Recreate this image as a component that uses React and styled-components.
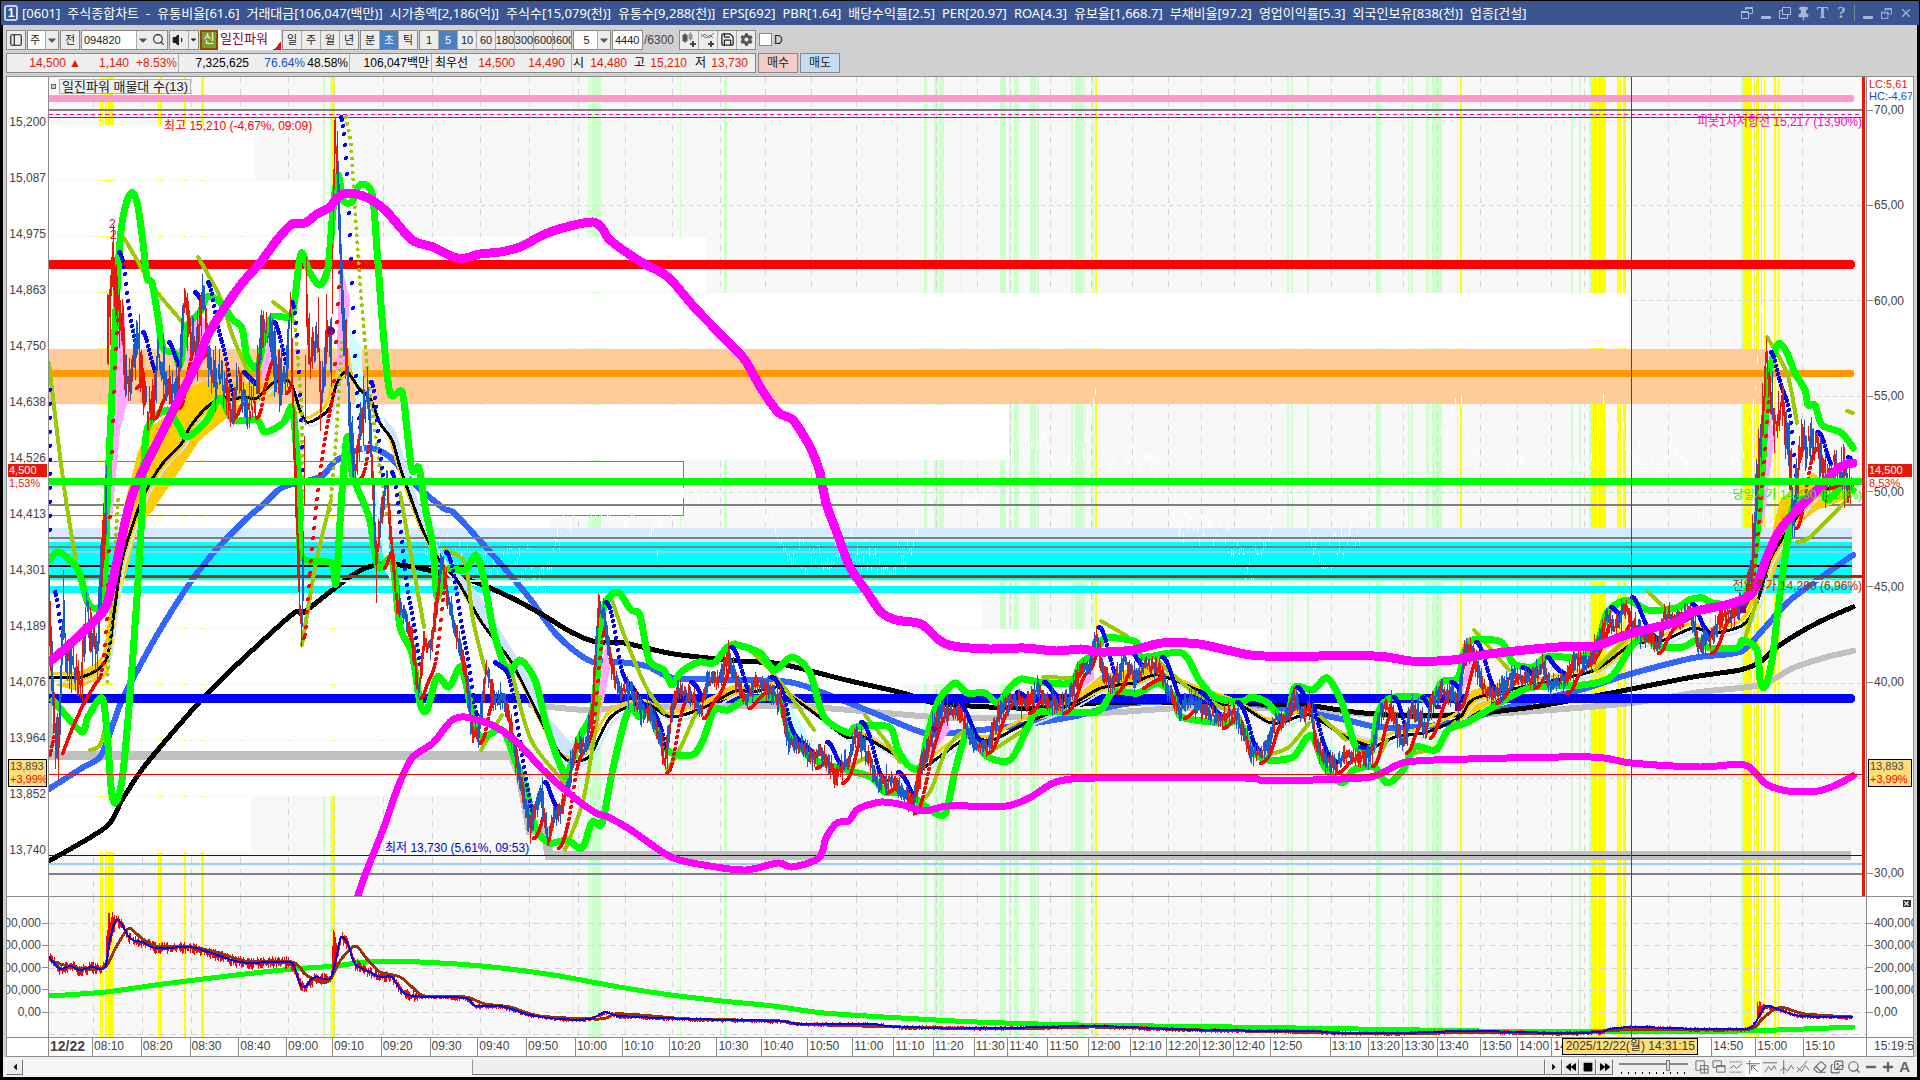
import React, { useState } from "react";
import styled, { createGlobalStyle, css } from "styled-components";
import {
  FaCaretDown,
  FaCaretLeft,
  FaCaretRight,
  FaBackward,
  FaForward,
  FaStop,
  FaCog,
} from "react-icons/fa";
import {
  Search,
  Volume1,
  Save,
  Pin,
  Minus,
  X,
  Plus,
  PanelLeft,
  Eraser,
  Images,
} from "lucide-react";

const GlobalStyle = createGlobalStyle`
  * {
    box-sizing: border-box;
  }
  body {
    margin: 0;
    background: #000;
    font-family: "Liberation Sans", "Noto Sans CJK KR", sans-serif;
    font-size: 12px;
    line-height: 14px;
    color: #222;
  }
  button, input, select {
    font: inherit;
    color: inherit;
    margin: 0;
    padding: 0;
  }
`;

/* ---------- data ---------- */

const titleParts = [
  "[0601]", "주식종합차트", "-", "유통비율[61.6]", "거래대금[106,047(백만)]", "시가총액[2,186(억)]",
  "주식수[15,079(천)]", "유통수[9,288(천)]", "EPS[692]", "PBR[1.64]", "배당수익률[2.5]", "PER[20.97]",
  "ROA[4.3]", "유보율[1,668.7]", "부채비율[97.2]", "영업이익률[5.3]", "외국인보유[838(천)]", "업종[건설]",
];

const prices = ["15,200", "15,087", "14,975", "14,863", "14,750", "14,638", "14,526", "14,413", "14,301", "14,189", "14,076", "13,964", "13,852", "13,740"];
const levels = ["70,00", "65,00", "60,00", "55,00", "50,00", "45,00", "40,00", "35,00", "30,00"];
const volumes = ["400,000", "300,000", "200,000", "100,000", "0,00"];

// label, left edge
const times = [
  ["12/22", 49], ["08:10", 93], ["08:20", 142], ["08:30", 191], ["08:40", 240], ["09:00", 288],
  ["09:10", 334], ["09:20", 383], ["09:30", 432], ["09:40", 480], ["09:50", 529], ["10:00", 578],
  ["10:10", 625], ["10:20", 672], ["10:30", 720], ["10:40", 765], ["10:50", 811], ["11:00", 856],
  ["11:10", 897], ["11:20", 936], ["11:30", 977], ["11:40", 1010], ["11:50", 1050], ["12:00", 1091],
  ["12:10", 1132], ["12:20", 1168], ["12:30", 1201], ["12:40", 1234], ["12:50", 1271], ["13:10", 1331],
  ["13:20", 1369], ["13:30", 1403], ["13:40", 1437], ["13:50", 1480], ["14:00", 1517], ["14:10", 1551],
  ["", 1584], ["", 1625], ["", 1668], ["14:50", 1710], ["15:00", 1754], ["15:10", 1802],
];
const PLOT_END = 1866;

const yellowBars = [
  [100, 1], [102, 1], [105, 2], [108, 6], [158, 1], [160, 2], [184, 2], [201, 3], [332, 3],
  [1095, 2], [1460, 2], [1591, 6], [1598, 8], [1617, 2], [1620, 1], [1623, 3],
  [1743, 9], [1754, 1], [1756, 3], [1761, 1], [1764, 1], [1774, 2], [1778, 1],
];
const greenBars = [
  [323, 2], [330, 2], [573, 1], [588, 1], [590, 1], [592, 8], [600, 1], [680, 1], [724, 3], [924, 3],
  [934, 4], [939, 5], [961, 1], [1000, 6], [1009, 2], [1014, 5], [1030, 6], [1037, 2], [1071, 2],
  [1075, 9], [1085, 1], [1092, 2], [1287, 2], [1291, 2], [1307, 2], [1376, 5], [1408, 1], [1411, 2],
  [1426, 3], [1432, 2], [1434, 8], [1457, 1], [1571, 2], [1579, 2], [1589, 2], [1741, 2],
];

// right edge of each price zone, from the top
const zones = [255, 323, 706, 1629, 1766, 1009, 683, 551, 982, 1267, 900, 480, 251];

const upperBand = "49,662 67,647 102,613 110,593 120,547 128,510 137,483 167,423 197,363 207,337 223,310 243,282 260,263 277,240 292,224 305,223 317,214 330,207 337,198 348,193 368,198 387,212 412,240 433,247 453,257 465,258 480,254 500,252 520,247 545,234 570,226 593,222 602,228 610,240 641,262 668,277 695,308 728,342 745,360 762,390 779,413 793,420 810,447 820,473 826,503 837,533 850,567 867,592 881,612 896,620 921,624 939,640 953,646 989,649 1024,648 1056,651 1081,649 1101,652 1133,650 1162,643 1199,644 1231,651 1264,656 1374,656 1411,661 1452,660 1489,654 1558,647 1595,646 1623,636 1648,629 1677,622 1693,612 1733,603 1753,592 1767,557 1780,530 1800,507 1820,487 1840,467 1853,463";
const lowerBand = "358,895 367,870 384,827 398,787 412,758 433,743 451,721 465,717 494,726 518,743 543,770 571,795 596,813 608,817 631,830 671,857 710,866 746,870 778,863 792,867 819,858 826,838 837,823 849,821 858,809 881,802 903,805 924,811 949,806 1006,806 1031,797 1056,782 1096,778 1244,778 1268,781 1362,778 1382,773 1407,762 1468,759 1591,757 1631,763 1700,767 1745,765 1766,784 1788,791 1818,791 1836,785 1853,776";
const longAverage = "49,861 106,827 122,800 147,763 204,697 245,657 294,613 304,612 351,576 376,565 408,566 469,580 510,597 543,615 571,632 596,642 624,643 674,654 739,661 781,664 846,680 903,693 935,703 989,707 1039,708 1096,703 1160,702 1260,704 1305,705 1354,712 1407,716 1468,714 1533,707 1611,693 1693,677 1740,670 1760,662 1780,645 1817,623 1853,607";
const midAverage = "49,789 82,768 100,757 110,733 122,700 143,660 163,625 192,580 216,550 245,520 265,503 283,487 320,477 337,460 367,448 390,457 410,480 443,508 453,512 473,533 506,570 531,600 555,633 580,655 596,663 606,661 646,666 674,678 739,680 789,682 821,692 874,713 910,728 931,734 981,730 1035,723 1076,716 1133,703 1240,703 1305,712 1346,720 1378,727 1419,727 1460,721 1517,705 1580,690 1627,675 1693,658 1740,652 1760,633 1787,603 1813,583 1853,555";
const slowAverage = "531,705 571,709 596,710 640,705 660,707 760,706 810,707 874,712 935,717 989,718 1060,715 1120,712 1182,708 1264,708 1387,715 1468,715 1550,710 1631,703 1700,692 1760,685 1793,668 1827,657 1853,651";
const shortAverage = "49,677 82,677 106,660 114,613 122,560 139,507 149,485 163,463 182,443 190,427 207,407 223,398 233,400 242,397 257,398 273,383 290,382 300,410 307,422 320,417 330,407 337,383 347,372 360,390 370,398 380,423 392,440 400,467 408,490 424,533 441,563 457,580 482,623 510,660 531,700 551,740 567,760 588,758 598,740 610,718 628,707 649,705 671,717 703,708 735,691 753,692 778,687 792,697 817,715 846,737 864,737 903,760 917,771 939,757 967,738 992,740 1028,722 1074,703 1101,688 1133,683 1158,675 1203,692 1240,705 1268,722 1284,722 1309,715 1346,737 1374,746 1395,737 1427,732 1460,717 1476,698 1542,683 1595,670 1631,645 1664,640 1693,628 1713,633 1743,625 1757,603 1770,560 1790,527 1813,497 1833,487 1853,486";
const envelopeTop = "49,560 59,552 78,570 88,603 98,608 104,593 107,507 112,393 118,270 122,223 128,198 133,193 138,207 143,243 147,278 152,283 158,317 163,348 175,353 180,365 187,327 200,312 207,297 220,302 233,320 242,328 247,357 257,368 263,343 272,317 290,317 295,297 301,253 310,273 320,285 328,267 333,210 338,175 343,200 352,202 360,185 372,193 377,250 383,330 390,393 402,392 407,430 412,470 419,468 425,507 433,547 437,597 445,570 465,570 476,555 484,580 494,633 508,672 520,660 535,680 547,727 561,767 567,775 580,737 592,713 598,667 603,610 617,592 631,610 640,615 649,660 664,670 672,685 681,672 699,662 714,663 731,645 760,653 774,670 792,657 810,673 824,717 849,733 856,727 889,727 898,750 910,767 921,767 928,733 939,700 955,683 967,693 985,693 998,703 1010,687 1021,679 1039,682 1071,683 1081,663 1096,653 1105,638 1136,642 1142,657 1182,653 1199,680 1215,697 1240,702 1252,697 1268,703 1280,717 1289,712 1295,687 1313,690 1327,678 1342,703 1354,743 1362,750 1372,750 1378,713 1391,698 1419,697 1431,702 1442,682 1458,678 1464,653 1472,640 1501,642 1513,663 1533,667 1546,657 1574,657 1595,650 1607,613 1627,600 1648,610 1676,608 1689,600 1703,598 1713,603 1740,603 1752,573 1760,500 1768,383 1773,357 1779,343 1787,353 1795,373 1805,390 1808,405 1815,405 1822,425 1840,432 1850,443 1853,448";
const envelopeBottom = "53,700 63,712 82,732 88,717 102,698 107,733 111,787 115,803 122,780 129,707 137,597 142,513 147,430 167,410 177,423 187,437 207,420 220,398 233,420 257,420 265,432 283,423 292,407 296,443 300,507 302,557 331,563 336,583 341,507 347,437 353,477 369,517 378,567 392,560 400,627 412,653 420,703 427,710 437,677 449,687 461,667 471,707 480,737 502,730 514,757 527,793 535,827 549,843 567,840 582,848 592,822 602,823 612,773 624,723 631,707 639,717 649,713 667,750 692,755 703,740 714,710 728,710 746,700 778,700 789,730 810,757 835,767 871,777 885,792 903,793 917,800 935,813 946,812 956,767 969,730 985,755 1010,760 1028,727 1039,712 1096,712 1113,692 1138,693 1158,683 1174,697 1182,717 1223,723 1240,723 1252,750 1268,760 1293,757 1305,740 1313,737 1325,767 1342,783 1354,770 1374,767 1387,783 1403,770 1415,747 1436,750 1448,730 1468,722 1493,707 1529,688 1582,685 1611,677 1631,647 1644,638 1660,647 1683,647 1697,640 1710,648 1737,648 1743,640 1757,650 1760,680 1765,687 1772,660 1778,610 1787,543 1793,507 1803,500 1820,490 1828,500 1843,485 1853,490";

const oliveSolid = [
  "49,363 58,440 67,507 78,570 88,603",
  "124,238 137,260 153,287 183,323",
  "198,257 220,297 233,337 253,383",
  "273,302 287,313 295,323",
  "90,750 100,745 107,720",
  "302,645 316,563 331,500",
  "400,493 412,560 424,627",
  "445,550 465,563 473,620 486,673",
  "481,750 502,715",
  "510,665 531,740 567,785",
  "565,850 584,797 600,697",
  "612,600 626,640 646,687 664,713",
  "667,770 678,753 696,713",
  "735,642 753,653 781,683 814,730",
  "849,767 865,758",
  "865,715 885,740 900,762",
  "917,805 931,790 946,750 964,730",
  "989,753 1028,727",
  "1043,677 1072,678",
  "1101,621 1127,636",
  "1154,657 1191,690 1240,717",
  "1268,755 1289,747 1309,723",
  "1321,717 1346,740",
  "1374,767 1387,740",
  "1415,753 1436,747 1455,722",
  "1474,630 1509,670",
  "1595,670 1625,640",
  "1647,591 1664,607",
  "1743,645 1757,600",
  "1767,337 1787,373 1797,423",
  "1797,542 1810,537 1847,500",
  "1847,411 1853,413",
];
const oliveDotted = [
  "118,500 112,600 107,687",
  "295,323 302,410 302,500",
  "346,117 351,143 355,210 360,283 368,377 380,470 388,520",
  "330,510 336,440 342,340",
];

const pricePath = "49,600 52,680 55,740 58,745 63,610 66,660 75,670 80,690 86,610 92,640 97,650 102,550 106,500 107,330 110,300 113,260 116,300 122,320 125,380 130,380 137,340 141,370 147,410 152,410 158,350 165,380 172,400 178,390 184,300 190,330 195,350 200,320 203,290 208,360 213,380 220,375 230,410 238,380 245,410 255,400 262,330 270,330 276,380 285,385 290,310 294,450 298,570 301,630 303,560 306,300 310,360 318,330 320,400 327,330 331,350 333,200 335,125 338,200 342,300 345,340 350,420 354,470 357,450 362,420 367,390 371,450 376,560 380,520 386,480 390,530 396,600 402,610 410,630 418,690 424,640 430,650 437,600 441,560 446,590 455,630 465,670 472,730 478,735 486,670 495,700 504,700 513,740 522,790 530,830 540,790 548,840 553,820 560,810 567,790 575,745 585,745 592,710 598,610 603,610 610,660 618,690 630,690 640,710 650,710 660,740 664,765 672,710 678,690 690,695 700,710 708,680 718,680 728,655 735,680 745,700 755,685 770,690 780,700 788,740 800,745 814,760 820,750 835,775 848,760 856,730 865,750 878,785 890,780 900,790 913,805 920,770 930,740 940,710 955,710 963,720 975,745 987,745 1000,710 1010,700 1025,705 1037,690 1050,705 1068,700 1080,670 1090,665 1096,635 1102,670 1112,685 1125,660 1135,680 1145,665 1158,670 1170,695 1180,710 1190,700 1205,710 1220,720 1233,710 1242,730 1252,755 1265,750 1275,720 1287,715 1293,695 1302,715 1310,705 1315,740 1325,762 1336,765 1345,755 1360,758 1372,752 1380,710 1390,705 1402,745 1412,705 1425,730 1432,700 1442,690 1458,700 1464,655 1472,650 1480,680 1490,695 1505,685 1515,675 1530,680 1542,665 1550,685 1565,680 1575,660 1590,660 1600,640 1607,615 1614,630 1626,605 1632,625 1645,635 1658,645 1664,615 1678,620 1690,612 1698,645 1712,635 1722,615 1738,610 1745,600 1752,560 1757,480 1762,420 1766,360 1770,390 1775,430 1782,400 1790,470 1793,520 1800,450 1810,440 1818,450 1825,480 1832,465 1845,475 1851,490";
const ghostPath = "425,560 440,540 470,560 500,556 530,560 545,585 556,545 566,515 580,490 620,515 640,490 657,540 665,500 700,480 730,470 760,500 790,545 815,560 850,545 870,555 890,560 912,545 925,480 960,480 980,490 1000,450 1040,440 1060,480 1085,430 1095,390 1110,470 1150,450 1170,500 1190,530 1220,525 1250,570 1280,490 1300,480 1320,560 1360,525 1380,460 1400,500 1440,445 1460,400 1480,470 1520,470 1560,480 1590,460 1602,400 1625,430 1650,470 1680,440 1700,500 1740,460 1755,380 1762,310 1768,300";

const volumeFast = "49,958 60,970 70,967 80,971 92,968 100,970 106,966 110,940 116,921 122,925 128,937 135,942 143,943 155,949 190,948 205,952 220,957 235,962 250,964 270,963 290,963 295,970 300,985 305,988 315,978 330,980 336,960 341,938 348,945 355,965 370,973 380,978 392,978 400,990 412,997 465,999 475,1007 500,1007 530,1016 560,1020 590,1020 605,1013 620,1017 690,1020 780,1022 800,1025 870,1025 900,1028 1000,1029 1095,1027 1200,1031 1310,1032 1340,1034 1400,1034 1470,1032 1560,1034 1600,1033 1610,1030 1635,1028 1700,1030 1745,1030 1755,1024 1766,1007 1780,1011 1800,1017 1852,1018";
const volumeMid = "49,960 60,965 85,970 105,968 115,950 124,935 130,929 138,936 155,947 190,948 220,954 245,962 292,963 305,975 320,983 330,981 340,962 355,947 367,960 380,973 400,978 412,988 425,997 465,998 485,1005 510,1008 540,1017 600,1020 615,1015 640,1016 690,1020 780,1022 800,1025 900,1028 1000,1030 1095,1028 1200,1031 1340,1034 1400,1035 1480,1033 1560,1035 1620,1031 1700,1031 1750,1030 1762,1020 1775,1010 1785,1009 1805,1015 1852,1018";
const volumeSlow = "49,997 106,993 163,985 245,975 294,970 335,967 367,963 420,963 482,967 547,975 592,983 625,989 671,996 722,1002 773,1007 824,1014 901,1019 977,1023 1079,1026 1232,1028 1420,1031 1560,1033 1740,1032 1853,1028";

/* ---------- helpers ---------- */

const toPoints = (str) => str.split(" ").map((p) => p.split(",").map(Number));

const valueAt = (pts, x) => {
  for (let i = 1; i < pts.length; i++) {
    if (x <= pts[i][0]) {
      const [x0, y0] = pts[i - 1];
      const [x1, y1] = pts[i];
      return y0 + ((y1 - y0) * (x - x0)) / (x1 - x0 || 1);
    }
  }
  return pts[pts.length - 1][1];
};

const smooth = (str) => {
  const p = toPoints(str);
  let d = `M${p[0][0]} ${p[0][1]}`;
  for (let i = 0; i < p.length - 1; i++) {
    const a = p[i - 1] || p[i];
    const b = p[i];
    const c = p[i + 1];
    const e = p[i + 2] || c;
    d += `C${b[0] + (c[0] - a[0]) / 7} ${b[1] + (c[1] - a[1]) / 7} ${c[0] - (e[0] - b[0]) / 7} ${c[1] - (e[1] - b[1]) / 7} ${c[0]} ${c[1]}`;
  }
  return d;
};

const makeRandom = (seed) => {
  let s = seed;
  return () => {
    s = (s * 16807) % 2147483647;
    return s / 2147483647;
  };
};

const makeCandles = () => {
  const rnd = makeRandom(41);
  const pts = toPoints(pricePath);
  const up = [];
  const down = [];
  let side = true;
  for (let x = 49; x < 1852; x += 1) {
    const y = valueAt(pts, x);
    const slope = Math.abs(valueAt(pts, x + 2) - valueAt(pts, x - 2));
    const wild = x < 380 || x > 1750 ? 32 : 13;
    const spike = rnd() > 0.93 ? wild : 0;
    const h = Math.min(70, 5 + rnd() * wild + spike + slope * 0.5);
    const mid = y + (rnd() - 0.5) * wild * 0.7;
    const top = Math.max(118, Math.round(mid - h / 2));
    if (rnd() > 0.55) side = !side;
    (side ? up : down).push(`M${x + 0.5} ${top}v${Math.round(h)}`);
  }
  return { up: up.join(""), down: down.join("") };
};

// stop-and-reverse dots that trail the price
const makeStops = () => {
  const pts = toPoints(pricePath);
  const above = [];
  const below = [];
  let rising = true;
  let stop = 760;
  let extreme = 600;
  let af = 0.03;
  for (let x = 50; x < 1852; x += 1) {
    const y = valueAt(pts, x);
    stop += (extreme - stop) * af;
    if (rising) {
      if (y < extreme) {
        extreme = y;
        af = Math.min(0.18, af + 0.012);
      }
      if (y > stop) {
        rising = false;
        stop = extreme - 8;
        extreme = y;
        af = 0.02;
      }
    } else {
      if (y > extreme) {
        extreme = y;
        af = Math.min(0.18, af + 0.012);
      }
      if (y < stop) {
        rising = true;
        stop = extreme + 8;
        extreme = y;
        af = 0.02;
      }
    }
    (rising ? below : above).push(`M${x} ${Math.round(stop)}h0`);
  }
  return { above: above.join(""), below: below.join("") };
};

const makeGhost = () => {
  const rnd = makeRandom(7);
  const pts = toPoints(ghostPath);
  let d = "";
  for (let x = 425; x < 1768; x += 2) {
    const y = valueAt(pts, x) + (rnd() - 0.5) * 32;
    d += `M${x + 0.5} ${Math.round(y)}v${Math.round(3 + rnd() * 8)}`;
  }
  return d;
};

const makeVolume = () => {
  const rnd = makeRandom(99);
  const pts = toPoints(volumeFast);
  let d = "";
  for (let x = 49; x < 1852; x += 1) {
    const y = valueAt(pts, x);
    const spread = x < 420 ? 6 : 2;
    let top = y - rnd() * spread;
    let bottom = y + rnd() * spread;
    if (x > 105 && x < 115) top = 910 + rnd() * 14 + Math.max(0, 108 - x) * 8;
    if (x > 331 && x < 340) top = 925 + rnd() * 16 + Math.max(0, 333 - x) * 10 + Math.max(0, x - 335) * 3;
    if (x > 1756 && x < 1767) top = 1002 + rnd() * 6;
    if (x > 293 && x < 303) bottom = y + 5;
    d += `M${x + 0.5} ${Math.round(top)}V${Math.round(bottom) + 1}`;
  }
  return d;
};

const candles = makeCandles();
const stops = makeStops();
const ghost = makeGhost();
const volumeBars = makeVolume();

/* ---------- charts ---------- */

const TimeBars = ({ y, height }) => (
  <g>
    {greenBars.map(([x, w]) => (
      <rect key={`g${x}`} x={x} y={y} width={w} height={height} fill="#ccffcc" />
    ))}
    {yellowBars.map(([x, w]) => (
      <rect key={`y${x}`} x={x} y={y} width={w} height={height} fill="#ffff00" />
    ))}
    {times.slice(1).map(([, x]) => (
      <path key={x} d={`M${x + 0.5} ${y}v${height}`} stroke="#d4d4d4" strokeDasharray="6 6" />
    ))}
  </g>
);

const Line = ({ points, color, width }) => (
  <path d={smooth(points)} stroke={color} strokeWidth={width} fill="none" strokeLinejoin="round" strokeLinecap="round" />
);

const Level = ({ y, h, color, x = 49, end = PLOT_END - 4 }) => (
  <rect x={x} y={y} width={end - x} height={h} fill={color} />
);

const RoundLevel = ({ y, width, color }) => (
  <path d={`M45 ${y}H1851`} stroke={color} strokeWidth={width} strokeLinecap="round" />
);

const PriceChart = () => (
  <Plot viewBox="49 77 1817 819" preserveAspectRatio="none" role="img" aria-label="일진파워 가격 차트">
    <TimeBars y={77} height={820} />
    {[205, 300, 396, 492, 588, 683, 778].map((y) => (
      <path key={y} d={`M49 ${y + 0.5}H1862`} stroke="#d4d4d4" strokeDasharray="4 4" />
    ))}
    {zones.map((right, i) => (
      <rect
        key={i}
        x="49"
        y={125 + i * 56}
        width={right - 49}
        height="55"
        fill={i === 4 ? "#ffcc99" : "#fff"}
      />
    ))}
    <path d="M49 461.5H683.500V515.500H49" fill="none" stroke="#808080" />

    <Level y={109} h={2} color="#808080" />
    <path d="M49 114.500H1862" stroke="#ff00cc" strokeDasharray="4 3" />
    <Level y={117} h={1} color="#f00" />
    <Level y={528} h={14} color="#d6eaff" end={1852} />
    <Level y={542} h={38} color="#00ffff" end={1852} />
    <Level y={586} h={7} color="#00ffff" end={1852} />
    <path d={ghost} stroke="#fff" strokeWidth="1" />

    <path d="M45 755.500H512 L520 775 L530 830 H545 L549 855.500 H1851" fill="none" stroke="#c0c0c0" strokeWidth="9" />
    <Line points="49,640 51,750" color="#c0c0c0" width={4} />
    <Line points={slowAverage} color="#c0c0c0" width={6} />
    <Line points={midAverage} color="#3366ff" width={6} />
    <Line points={longAverage} color="#000" width={5} />

    <RoundLevel y={98.5} width={7} color="#ff99cc" />
    <RoundLevel y={264.5} width={9} color="#f00" />
    <RoundLevel y={373.5} width={7} color="#ff9900" />
    <RoundLevel y={698.5} width={9} color="#00f" />
    <Level y={504} h={2} color="#808080" />
    <Level y={537} h={2} color="#808080" end={1852} />
    <Level y={546} h={2} color="#808080" end={1852} />
    <Level y={551} h={2} color="#99ccff" end={1852} />
    <Level y={565} h={2} color="#000" end={1852} />
    <Level y={575} h={3} color="#993300" />
    <Level y={580} h={2} color="#ccffcc" end={1852} />
    <Level y={855} h={1} color="#00f" />
    <Level y={863} h={2} color="#99ccff" />
    <Level y={873} h={2} color="#808080" />

    <g fill="#ffcc00">
      <path d="M104 660L116 560L123 510L137 455L147 430L173 410L190 387L217 377L247 384L273 373L290 377L287 390L233 413L200 440L180 470L153 510L137 530L122 590L108 675L75 690L55 685Z" />
      <path d="M334 400L340 365L347 350L352 375L344 376L336 396Z" />
      <path d="M1767 553L1780 500L1793 487L1813 473L1827 482L1850 492V498L1817 510L1800 523L1787 540L1768 590Z" />
      <path d="M1030 722L1074 698L1101 675V692L1060 712Z M1101 675L1158 664V680L1101 694Z M1460 712L1472 690L1500 683V698L1460 722Z M1595 665L1626 635L1631 650L1597 676Z M700 706L735 684L750 688L735 697Z" />
    </g>
    <g fill="#cce5ff">
      <path d="M382 415L395 430L408 470L426 525L445 560L478 593L502 633L531 680L551 720L571 743L588 727L594 745L567 762L551 742L531 702L510 662L482 625L441 565L408 492Z" />
      <path d="M856 725L889 745L915 762V772L864 740Z M1345 730L1374 740V748L1350 740Z" />
    </g>
    <g fill="#ffaaff">
      <path d="M108 500L115 350L124 300L128 400L120 430L112 520Z M186 360L195 310L206 320L196 380Z M262 370L270 330L274 350L262 390Z M335 400L340 260L350 300L344 370Z M590 760L600 680L606 640L610 670L600 720Z M1755 560L1764 450L1770 400L1774 440L1764 520Z M1080 690L1094 660V680Z M920 770L946 715L950 730Z M1458 700L1470 650L1474 670Z" />
    </g>
    <g fill="#ccffff">
      <path d="M346 320L356 400L365 470L362 350Z M372 480L385 520L396 590L385 570Z M402 610L425 680L412 620Z M780 690L805 730L815 750L795 730Z M1315 725L1345 760L1330 760Z" />
    </g>
    <g transform="translate(-3 -4)">
      <Line points={shortAverage} color="#ffcc00" width={3} />
    </g>
    <g transform="translate(3 4)">
      <Line points={shortAverage} color="#cce5ff" width={2} />
    </g>
    <Line points={shortAverage} color="#000" width={3} />

    {oliveSolid.map((p) => (
      <Line key={p} points={p} color="#99cc00" width={4} />
    ))}
    {oliveDotted.map((p) => (
      <polyline key={p} points={p} fill="none" stroke="#99cc00" strokeWidth="4" strokeLinecap="round" strokeDasharray="0 7" />
    ))}
    <Line points={envelopeTop} color="#0f0" width={7} />
    <Line points={envelopeBottom} color="#0f0" width={7} />

    <path d={stops.above} stroke="#00f" strokeWidth="4" strokeLinecap="round" />
    <path d={stops.below} stroke="#f00" strokeWidth="4" strokeLinecap="round" />
    <path d="M50 390V540" stroke="#00f" strokeWidth="4" strokeLinecap="round" strokeDasharray="0 14" />
    <path d={candles.up} stroke="#e81809" />
    <path d={candles.down} stroke="#1a5cc8" />

    <Line points={upperBand} color="#ff00ff" width={9} />
    <Line points={lowerBand} color="#ff00ff" width={7} />
    <Level y={478} h={7} color="#0f0" />
    <circle cx="331" cy="331" r="4" fill="#800080" />
    <circle cx="934" cy="729" r="3" fill="#800080" />
    <path d="M1435 705h6v4h-6z M1455 703h6v8h-6z M1740 606h6v7h-6z" fill="#800080" />

    <Level y={774} h={1} color="#f00" />
    <rect x="1631" y="77" width="1" height="820" fill="#f00" />
    <rect x="1862" y="77" width="3" height="820" fill="#e81809" />

    <Note x="164" y="130" fill="#f00">최고 15,210 (-4,67%, 09:09)</Note>
    <Note x="385" y="852" fill="#00c">최저 13,730 (5,61%, 09:53)</Note>
    <Note x="1862" y="126" fill="#ff00cc" textAnchor="end">피봇1차저항선 15,217 (13,90%)</Note>
    <Note x="1862" y="499" fill="#0f0" textAnchor="end">당일시가 14,480 (8,38%)</Note>
    <Note x="1862" y="590" fill="#993300" textAnchor="end">전일종가 14,290 (6,96%)</Note>
    <Note x="109" y="228" fill="#d0021b">2</Note>
    <Note x="110" y="239" fill="#d0021b">2</Note>
  </Plot>
);

const VolumeChart = () => (
  <Plot viewBox="49 898 1817 140" preserveAspectRatio="none" role="img" aria-label="거래량 지표">
    <TimeBars y={898} height={140} />
    {[924, 946, 969, 991, 1013, 1035].map((y) => (
      <path key={y} d={`M49 ${y + 0.5}H1866`} stroke="#d4d4d4" strokeDasharray="6 5" />
    ))}
    <Line points={volumeSlow} color="#0f0" width={5} />
    <path d={volumeBars} stroke="#f00" />
    <Line points={volumeMid} color="#993300" width={3} />
    <Line points={volumeFast} color="#00f" width={2} />
    <rect x="1631" y="898" width="1" height="140" fill="#f00" />
  </Plot>
);

/* ---------- icons ---------- */

const RestoreIcon = ({ size = 12, flip }) => (
  <svg width={size} height={size} viewBox="0 0 12 12" fill="none" stroke="currentColor">
    {flip ? (
      <path d="M3.500 0.500h8v7h-8zM3 3.500H0.500v8h8V8" />
    ) : (
      <path d="M4.500 3V0.500h7v6H8M4 1.500h8M0.500 4.500h7v7h-7zM0 5.500h8" />
    )}
  </svg>
);

/* ---------- app ---------- */

const ToolGroup = ({ items, value, onChange }) => (
  <Group>
    {items.map((item) => (
      <Tool key={item} $active={item === value} onClick={() => onChange(item)}>
        {item}
      </Tool>
    ))}
  </Group>
);

const App = () => {
  const [period, setPeriod] = useState("초");
  const [unit, setUnit] = useState("5");

  return (
    <>
      <GlobalStyle />
      <Window>
        <TitleBar>
          <Badge>1</Badge>
          <h1>
            {titleParts.map((part) => (
              <span key={part}>{part}</span>
            ))}
          </h1>
          <WindowButtons>
            <button aria-label="분리"><RestoreIcon /></button>
            <button aria-label="내리기"><Low /></button>
            <button aria-label="복사"><RestoreIcon flip /></button>
            <button aria-label="고정"><Pin size={15} fill="currentColor" /></button>
            <button aria-label="글꼴"><b>T</b></button>
            <button aria-label="도움말"><b>?</b></button>
            <i />
            <button aria-label="최소화"><Low /></button>
            <button aria-label="이전 크기"><RestoreIcon size={11} /></button>
            <button aria-label="닫기"><X size={14} /></button>
          </WindowButtons>
        </TitleBar>

        <Toolbar>
          <Group>
            <Tool aria-label="패널"><PanelLeft size={14} /></Tool>
          </Group>
          <Combo $width={32}>
            <select aria-label="종류" defaultValue="주"><option>주</option></select>
            <FaCaretDown />
          </Combo>
          <Group>
            <Tool>전</Tool>
          </Group>
          <Group>
            <Combo $width={67} $plain>
              <input aria-label="종목코드" defaultValue="094820" />
              <FaCaretDown />
            </Combo>
            <Tool aria-label="검색"><Search size={13} /></Tool>
          </Group>
          <Group>
            <Tool aria-label="소리"><Volume1 size={14} fill="currentColor" /></Tool>
            <Tool $width={10} aria-label="소리 설정"><FaCaretDown size={9} /></Tool>
          </Group>
          <Stock>
            <em>신</em>
            <span>일진파워</span>
          </Stock>
          <ToolGroup items={["일", "주", "월", "년"]} value={period} onChange={setPeriod} />
          <ToolGroup items={["분", "초", "틱"]} value={period} onChange={setPeriod} />
          <ToolGroup items={["1", "5", "10", "60", "180", "300", "600", "3600"]} value={unit} onChange={setUnit} />
          <Combo $width={38} $center>
            <input aria-label="간격" defaultValue="5" />
            <FaCaretDown />
          </Combo>
          <Combo $width={31}>
            <input aria-label="표시 개수" defaultValue="4440" />
          </Combo>
          <Total>/6300</Total>
          <Group>
            <Tool aria-label="지표 추가">
              <svg width="17" height="17" viewBox="0 0 17 17">
                <path d="M2 4h4v6H2zM4 2v10" fill="#555" stroke="#555" />
                <path d="M8 3h3v5H8zM9.500 1v9" fill="#999" stroke="#999" />
                <path d="M9 13h6M12 10v6" stroke="#444" strokeWidth="2" />
              </svg>
            </Tool>
            <Tool aria-label="신호 추가">
              <svg width="17" height="17" viewBox="0 0 17 17" fill="none">
                <path d="M1 6l4-3 4 4 5-5M1 3l5 4 4-3 3 3" stroke="#777" />
                <path d="M8 13h6M11 10v6" stroke="#444" strokeWidth="2" />
              </svg>
            </Tool>
            <Tool aria-label="저장"><Save size={15} /></Tool>
            <Tool aria-label="설정"><FaCog size={13} color="#555" /></Tool>
          </Group>
          <Check>
            <input type="checkbox" /> D
          </Check>
        </Toolbar>

        <InfoRow>
          <Quotes>
            <Cell $width={172}>
              <Num $width={59} $color="#e81809">14,500</Num>
              <Num $width={15} $color="#e81809">▲</Num>
              <Num $width={48} $color="#e81809">1,140</Num>
              <Num $width={48} $color="#e81809">+8.53%</Num>
            </Cell>
            <Cell $width={171}>
              <Num $width={70}>7,325,625</Num>
              <Num $width={56} $color="#0f4fc8">76.64%</Num>
              <Num $width={43}>48.58%</Num>
            </Cell>
            <Cell $width={82}>
              <Num $width={79}>106,047백만</Num>
            </Cell>
            <Cell $width={140}>
              <Num $width={36}>최우선</Num>
              <Num $width={47} $color="#e81809">14,500</Num>
              <Num $width={50} $color="#e81809">14,490</Num>
            </Cell>
            <Cell $width={183}>
              <Num $width={12}>시</Num>
              <Num $width={43} $color="#e81809">14,480</Num>
              <Num $width={18}>고</Num>
              <Num $width={42} $color="#e81809">15,210</Num>
              <Num $width={19}>저</Num>
              <Num $width={42} $color="#e81809">13,730</Num>
            </Cell>
          </Quotes>
          <Order $color="#f4ccc8">매수</Order>
          <Order $color="#c6dcf2">매도</Order>
        </InfoRow>

        <ChartPanel>
          <Axis $side="left" $top={39} $bottom={40}>
            {prices.map((p) => (
              <li key={p}>{p}</li>
            ))}
            <PriceTag $top={47.2} $tone="red">4,500</PriceTag>
            <PriceTag $top={48.8} $tone="text">1,53%</PriceTag>
            <PriceTag $top={83.3} $tone="yellow">13,893<br /><b>+3,99%</b></PriceTag>
          </Axis>
          <PlotCell>
            <Legend><i /><span>일진파워 매물대 수(13)</span></Legend>
            <PriceChart />
          </PlotCell>
          <Axis $side="right" $top={27} $bottom={17}>
            {levels.map((l) => (
              <li key={l}>{l}</li>
            ))}
            <PriceTag $top={0.1} $tone="text">LC:5,61</PriceTag>
            <PriceTag $top={1.6} $tone="blue">HC:-4,67</PriceTag>
            <PriceTag $top={47.2} $tone="red">14,500</PriceTag>
            <PriceTag $top={48.8} $tone="text">8,53%</PriceTag>
            <PriceTag $top={83.3} $tone="yellow">13,893<br /><b>+3,99%</b></PriceTag>
          </Axis>

          <Axis $side="left" $ticks $top={20} $bottom={19}>
            {volumes.map((v) => (
              <li key={v}>{v}</li>
            ))}
          </Axis>
          <PlotCell>
            <VolumeChart />
          </PlotCell>
          <Axis $side="right" $top={20} $bottom={19}>
            {volumes.map((v) => (
              <li key={v}>{v}</li>
            ))}
            <ClosePane aria-label="지표 닫기"><X size={7} strokeWidth={4} /></ClosePane>
          </Axis>

          <TimeEnd />
          <TimeAxis>
            {times.map(([label, x], i) => {
              const next = i + 1 < times.length ? times[i + 1][1] : PLOT_END;
              return (
                <TimeCell key={x} $first={i === 0} style={{ flexGrow: next - x }}>
                  {label}
                </TimeCell>
              );
            })}
            <TimeTag>2025/12/22(월) 14:31:15</TimeTag>
          </TimeAxis>
          <TimeEnd $line>15:19:5</TimeEnd>
        </ChartPanel>

        <BottomBar>
          <Small aria-label="왼쪽"><FaCaretLeft /></Small>
          <Track><Thumb /></Track>
          <Small aria-label="오른쪽"><FaCaretRight /></Small>
          <Small aria-label="뒤로"><FaBackward /></Small>
          <Small aria-label="정지"><FaStop /></Small>
          <Small aria-label="앞으로"><FaForward /></Small>
          <Speed type="range" aria-label="속도" defaultValue="72" />
          <Tools>
            <button aria-label="격자">
              <svg viewBox="0 0 15 15"><path d="M6 11H1V1h9v5M6 6h8v8H6zM10 6v8M6 10h8" /></svg>
            </button>
            <button aria-label="겹치기">
              <svg viewBox="0 0 15 15"><path d="M5 8H1V1h9v5M5 6h9v7H5zM5 7h9" /></svg>
            </button>
            <button aria-label="영역">
              <svg viewBox="0 0 15 15"><path d="M1 2h13M1 13h13" strokeDasharray="2 1" /><path d="M1 9l4-3 3 3 6-5" /></svg>
            </button>
            <Pressed aria-label="십자선">
              <svg viewBox="0 0 15 15"><path d="M0 4h15M4 0v15M6 6l7 7M6 6v5M6 6h5" /></svg>
            </Pressed>
            <button aria-label="수평선">
              <svg viewBox="0 0 15 15"><path d="M0 3h15M2 13l4-6 3 4 3-5 2 4" /></svg>
            </button>
            <button aria-label="수직선">
              <svg viewBox="0 0 15 15"><path d="M4 0v15M0 12l4-4 4 4 4-6 3 4" /></svg>
            </button>
            <button aria-label="추세선">
              <svg viewBox="0 0 15 15"><path d="M1 13L12 1M1 8l5 4 4-6 4 5" /></svg>
            </button>
            <button aria-label="모두 지우기"><Eraser /></button>
            <button aria-label="저장 그림"><Images /></button>
            <button aria-label="확대경"><Search /></button>
            <button aria-label="축소"><Minus strokeWidth={4} /></button>
            <button aria-label="확대"><Plus strokeWidth={4} /></button>
            <button aria-label="자동"><b>A</b></button>
          </Tools>
        </BottomBar>
      </Window>
    </>
  );
};

/* ---------- styles ---------- */

const Window = styled.main`
  display: flex;
  flex-direction: column;
  height: 100vh;
  border: solid #000;
  border-width: 1px 3px 3px;
  background: #d0d0d0;
`;

const TitleBar = styled.header`
  display: flex;
  align-items: center;
  gap: 4px;
  height: 24px;
  margin: 0 -2px;
  padding: 0 4px 0 3px;
  background: #3a5590;
  color: #fff;
  h1 {
    display: flex;
    flex: 1;
    gap: 7px;
    min-width: 0;
    margin: 0;
    overflow: hidden;
    font: 400 13px/18px "Noto Sans", "Noto Sans CJK KR", sans-serif;
    white-space: nowrap;
  }
`;

const Badge = styled.span`
  width: 14px;
  height: 16px;
  border: 2px solid #c8d2e8;
  border-radius: 3px;
  font-size: 12px;
  font-weight: 700;
  line-height: 12px;
  text-align: center;
`;

const WindowButtons = styled.div`
  display: flex;
  align-items: center;
  color: #a9b8d8;
  button {
    display: flex;
    align-items: center;
    justify-content: center;
    width: 19px;
    height: 20px;
    border: 0;
    background: none;
  }
  b {
    font: 700 17px "Liberation Serif", serif;
  }
  i {
    width: 1px;
    height: 16px;
    margin: 0 3px;
    background: #7d8899;
  }
`;

const Low = styled.span`
  width: 10px;
  height: 3px;
  margin-top: 8px;
  border-radius: 1px;
  background: #a9b8d8;
`;

const Toolbar = styled.div`
  display: flex;
  align-items: center;
  gap: 1px;
  height: 28px;
  padding: 1px 3px 0;
`;

const Group = styled.div`
  display: flex;
  height: 20px;
  border: 1px solid #8a8a8a;
`;

const Tool = styled.button`
  display: flex;
  align-items: center;
  justify-content: center;
  width: ${(p) => p.$width || 19}px;
  overflow: hidden;
  border: 0;
  border-right: 1px solid #a8a8a8;
  background: ${(p) => (p.$active ? "#4a80c4" : "#ececec")};
  color: ${(p) => (p.$active ? "#fff" : "#222")};
  font-size: 11px;
  white-space: nowrap;
  &:last-child {
    width: ${(p) => (p.$width || 19) - 1}px;
    border-right: 0;
  }
`;

const Combo = styled.div`
  display: flex;
  align-items: center;
  width: ${(p) => p.$width}px;
  height: ${(p) => (p.$plain ? 18 : 20)}px;
  border: ${(p) => (p.$plain ? "0" : "1px solid #8a8a8a")};
  border-right-width: 1px;
  background: #fff;
  select,
  input {
    flex: 1;
    min-width: 0;
    height: 100%;
    padding-left: 2px;
    border: 0;
    outline: 0;
    appearance: none;
    background: none;
    font-size: 11px;
    text-align: ${(p) => (p.$center ? "center" : "left")};
  }
  svg {
    flex: none;
    width: 13px;
    height: 100%;
    padding: 2px;
    border-left: 1px solid #aaa;
    background: #ececec;
    color: #555;
  }
`;

const Stock = styled.div`
  display: flex;
  width: 81px;
  height: 20px;
  background: linear-gradient(135deg, #fff 50%, #d8102c 50%) right bottom / 8px 8px no-repeat #fff;
  color: #800040;
  font-size: 13px;
  line-height: 18px;
  em {
    width: 18px;
    border: 2px solid #974806;
    background: #7f9a2f;
    color: #fff;
    font-size: 12px;
    font-style: normal;
    line-height: 15px;
    text-align: center;
  }
  span {
    padding-left: 2px;
  }
`;

const Total = styled.span`
  width: 34px;
  color: #444;
  font-size: 12px;
`;

const Check = styled.label`
  display: flex;
  align-items: center;
  gap: 2px;
  padding-left: 2px;
  input {
    width: 13px;
    height: 13px;
    border: 1px solid #888;
    appearance: none;
    background: #fff;
  }
`;

const InfoRow = styled.div`
  display: flex;
  gap: 2px;
  height: 20px;
  padding-left: 3px;
`;

const Quotes = styled.div`
  display: flex;
  border: 1px solid #8a8a8a;
  background: #efefef;
  color: #000;
`;

const Cell = styled.div`
  display: flex;
  align-items: center;
  width: ${(p) => p.$width}px;
  border-right: 1px solid #b0b0b0;
  &:last-child {
    border-right: 0;
  }
`;

const Num = styled.span`
  width: ${(p) => p.$width}px;
  color: ${(p) => p.$color || "#000"};
  font-size: 12px;
  text-align: right;
  white-space: nowrap;
`;

const Order = styled.button`
  width: 40px;
  border: 1px solid #8a8a8a;
  background: ${(p) => p.$color};
`;

const ChartPanel = styled.section`
  display: grid;
  flex: 1;
  grid-template: minmax(0, 820fr) minmax(0, 141fr) 19px / 41px minmax(0, 1fr) 47px;
  min-height: 0;
  margin: 3px 3px 0;
  border: 1px solid #8c8c8c;
  border-bottom: 0;
  background: #fff;
`;

const PlotCell = styled.div`
  position: relative;
  min-height: 0;
  border-left: 1px solid #8c8c8c;
  border-bottom: 1px solid #8c8c8c;
  background: #f8f8f8;
`;

const Plot = styled.svg`
  display: block;
  width: 100%;
  height: 100%;
  shape-rendering: crispEdges;
`;

const Note = styled.text`
  font-family: "Liberation Sans", "Noto Sans CJK KR", sans-serif;
  font-size: 12px;
`;

const Legend = styled.div`
  position: absolute;
  top: 2px;
  left: 2px;
  display: flex;
  align-items: center;
  gap: 3px;
  i {
    width: 5px;
    height: 5px;
    border: 1px solid #666;
    background: #ccc;
  }
  span {
    width: 132px;
    padding: 0 2px;
    border: 1px solid #b0b0b0;
    background: #f0f0f0;
    font-size: 13px;
    line-height: 13px;
    white-space: nowrap;
  }
`;

const Axis = styled.ul`
  position: relative;
  display: flex;
  flex-direction: column;
  justify-content: space-between;
  min-height: 0;
  margin: 0;
  padding: ${(p) => p.$top}px 0 ${(p) => p.$bottom}px;
  border-bottom: 1px solid #8c8c8c;
  overflow: hidden;
  background: #fff;
  color: #444;
  list-style: none;
  li {
    display: flex;
    align-items: center;
    height: 12px;
    line-height: 12px;
  }
  ${(p) =>
    p.$side === "left"
      ? css`
          li {
            justify-content: flex-end;
            padding-right: 2px;
          }
        `
      : css`
          border-left: 1px solid #8c8c8c;
          li::before {
            flex: none;
            width: 6px;
            height: 1px;
            margin-right: 1px;
            background: #8c8c8c;
            content: "";
          }
        `}
  ${(p) =>
    p.$ticks &&
    css`
      li {
        padding-right: 0;
      }
      li::after {
        flex: none;
        width: 6px;
        height: 1px;
        margin-left: 1px;
        background: #8c8c8c;
        content: "";
      }
    `}
`;

const tones = {
  red: css`
    background: #e81809;
    color: #fff;
  `,
  text: css`
    color: #e81809;
  `,
  blue: css`
    color: #0f4fc8;
  `,
  yellow: css`
    border: 1px solid #000;
    background: #ffdd77;
    line-height: 13px;
    b {
      color: #f00;
      font-weight: 400;
    }
  `,
};

const PriceTag = styled.li`
  && {
    position: absolute;
    top: ${(p) => p.$top}%;
    right: 1px;
    left: 1px;
    display: block;
    height: auto;
    padding: 0 0 0 1px;
    overflow: hidden;
    font-size: 11px;
    line-height: 13px;
    white-space: nowrap;
    ${(p) => tones[p.$tone]}
  }
  &&::before,
  &&::after {
    content: none;
  }
`;

const ClosePane = styled.button`
  position: absolute;
  top: 3px;
  right: 2px;
  display: flex;
  width: 8px;
  height: 7px;
  border: 0;
  background: #333;
  color: #fff;
`;

const TimeAxis = styled.div`
  position: relative;
  display: flex;
  min-width: 0;
  border-bottom: 1px solid #8c8c8c;
`;

const TimeCell = styled.div`
  flex: 0 1 0;
  min-width: 0;
  overflow: hidden;
  border-left: 1px solid #8c8c8c;
  padding-left: 1px;
  color: #444;
  font-size: ${(p) => (p.$first ? 14 : 12)}px;
  font-weight: ${(p) => (p.$first ? 700 : 400)};
  line-height: 17px;
  white-space: nowrap;
`;

const TimeEnd = styled.div`
  padding-left: 7px;
  border-bottom: 1px solid #8c8c8c;
  border-left: ${(p) => (p.$line ? "1px solid #8c8c8c" : "0")};
  color: #444;
  line-height: 17px;
`;

const TimeTag = styled.div`
  position: absolute;
  top: 0;
  left: 83.3%;
  width: 136px;
  height: 17px;
  border: 1px solid #000;
  background: #ffdd77;
  color: #333;
  line-height: 14px;
  text-align: center;
  white-space: nowrap;
`;

const BottomBar = styled.footer`
  display: flex;
  align-items: center;
  height: 20px;
  padding: 0 4px 0 3px;
  background: #efefef;
`;

const Small = styled.button`
  display: flex;
  align-items: center;
  justify-content: center;
  width: 17px;
  height: 16px;
  border: 1px solid;
  border-color: #fff #777 #777 #fff;
  background: #ececec;
  color: #000;
  font-size: 10px;
`;

const Track = styled.div`
  flex: 1;
  height: 16px;
  background: #f6f6f6;
`;

const Thumb = styled.div`
  width: 70.5%;
  height: 16px;
  margin-left: auto;
  border: 1px solid;
  border-color: #fff #777 #777 #999;
  background: #efefef;
`;

const Speed = styled.input`
  width: 69px;
  height: 16px;
  margin: 0 6px !important;
  appearance: none;
  background:
    linear-gradient(#888, #888) 0 4px / 100% 2px no-repeat,
    repeating-linear-gradient(90deg, #000 0 1px, transparent 1px 7px) 2px 13px / 100% 2px no-repeat;
  &::-webkit-slider-thumb {
    width: 4px;
    height: 11px;
    margin-top: -4px;
    appearance: none;
    border: 1px solid #777;
    background: #ddd;
  }
`;

const Tools = styled.div`
  display: flex;
  justify-content: space-between;
  width: 219px;
  color: #666;
  button {
    display: flex;
    align-items: center;
    justify-content: center;
    width: 17px;
    height: 17px;
    border: 0;
    background: none;
  }
  svg {
    width: 14px;
    height: 14px;
    fill: none;
    stroke: currentColor;
  }
  b {
    font-size: 15px;
  }
`;

const Pressed = styled.button`
  && {
    background: #fff;
  }
`;

export default App;
